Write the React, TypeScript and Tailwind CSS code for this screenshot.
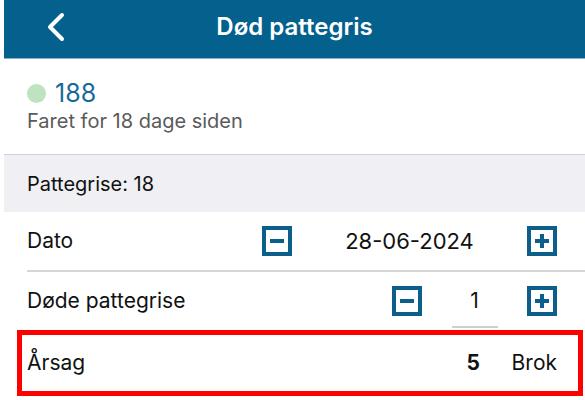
import React from 'react';

const Square = ({ plus }: { plus?: boolean }) => (
  <svg width="30" height="30" viewBox="0 0 30 30" className="shrink-0">
    <rect x="2" y="2" width="26" height="26" fill="none" stroke="#0b5f8a" strokeWidth="4" />
    <line x1="8" y1="15" x2="22" y2="15" stroke="#0b5f8a" strokeWidth="4" />
    {plus && <line x1="15" y1="8" x2="15" y2="22" stroke="#0b5f8a" strokeWidth="4" />}
  </svg>
);

const App: React.FC = () => {
  return (
    <div className="w-[585px] h-[400px] bg-white pl-[4px] overflow-hidden font-['Inter','Roboto',sans-serif] text-[#111]">
      <header className="h-[59px] bg-[#04608c] border-b border-[#86b0c8] relative flex items-center justify-center">
        <svg width="24" height="32" viewBox="0 0 24 32" className="absolute left-[40px] top-[11px]">
          <path d="M18 4 L6 16 L18 28" fill="none" stroke="white" strokeWidth="4" strokeLinecap="round" strokeLinejoin="round" />
        </svg>
        <h1 className="text-white text-[24px] font-semibold -mt-[4px]">Død pattegris</h1>
      </header>

      <section className="h-[95px] pl-[23px] pt-[19px]">
        <div className="flex items-center gap-[9px] h-[31px]">
          <span className="w-[19px] h-[19px] rounded-full bg-[#bfe2bf]" />
          <span className="text-[25px] text-[#17699a] leading-none">188</span>
        </div>
        <div className="text-[20px] text-[#5a5a5a] mt-[-3px]">Faret for 18 dage siden</div>
      </section>

      <div className="h-[58px] bg-[#efeff4] border-t border-[#d2d2d6] flex items-center pl-[23px] text-[20px]">
        Pattegrise: 18
      </div>

      <div className="pl-[23px]">
        <div className="h-[60px] border-b-2 border-[#d6d6d6] flex items-center text-[21px]">
          <span className="flex-1">Dato</span>
          <Square />
          <span className="w-[235px] text-center text-[22px]">28-06-2024</span>
          <Square plus />
          <span className="w-[28px]" />
        </div>
        <div className="h-[58px] flex items-center text-[21px]">
          <span className="flex-1">Døde pattegrise</span>
          <Square />
          <div className="w-[105px] h-full flex flex-col items-center justify-center relative">
            <span className="text-[21px]">1</span>
            <span className="absolute bottom-[2px] w-[46px] h-[2px] bg-[#cfcfcf]" />
          </div>
          <Square plus />
          <span className="w-[28px]" />
        </div>
      </div>

      <div className="ml-[13px] mr-[2px] h-[66px] border-[5px] border-[#ff0000] flex items-center pl-[5px] text-[21px]">
        <span className="flex-1">Årsag</span>
        <span className="font-bold w-[45px]">5</span>
        <span className="mr-[21px]">Brok</span>
      </div>
    </div>
  );
};

export default App;
